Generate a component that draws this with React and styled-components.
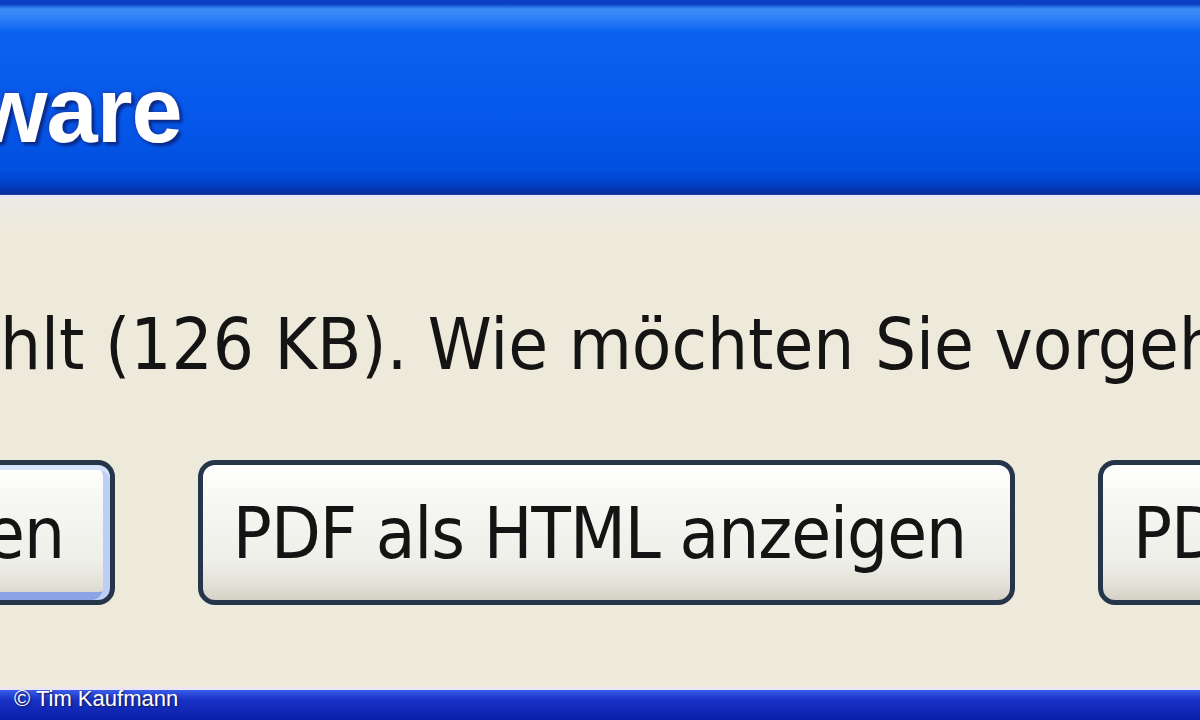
import React from "react";
import styled, { createGlobalStyle } from "styled-components";

const GlobalStyle = createGlobalStyle`
	html, body {
		margin: 0;
		padding: 0;
		background: #eeeadb;
	}
	#root {
		height: 720px;
	}
`;

const App = () => {
	return (
		<>
			<GlobalStyle />
			<Window>
				<TitleBar>
					<Title>ware</Title>
				</TitleBar>

				<Content>
					<Message>hlt (126 KB). Wie möchten Sie vorgeh</Message>
					<ButtonRow>
						<DialogButton $default $width={300} $align="flex-end" $lead={-185}>
							en
						</DialogButton>
						<DialogButton $width={817}>PDF als HTML anzeigen</DialogButton>
						<DialogButton $width={400} $align="flex-start">
							PDF speichern
						</DialogButton>
					</ButtonRow>
				</Content>

				<FooterStrip>
					<Credit>© Tim Kaufmann</Credit>
				</FooterStrip>
			</Window>
		</>
	);
};

export default App;

const Window = styled.div`
	height: 720px;
	width: 1200px;
	overflow: hidden;
	display: flex;
	flex-direction: column;
	background: #eeeadb;
`;

const TitleBar = styled.div`
	height: 198px;
	flex-shrink: 0;
	box-sizing: border-box;
	padding-top: 64px;
	background: linear-gradient(
		to bottom,
		#0a3fc4 0px,
		#0a3fc4 4px,
		#3d8ef8 9px,
		#2f80f6 18px,
		#0b62f0 32px,
		#0558ea 120px,
		#024fe0 170px,
		#0140c8 184px,
		#0a2c9a 194px,
		#9db4ee 198px
	);
	border-bottom: 3px solid #e4e6f2;
`;

const Title = styled.div`
	margin-left: -24px;
	font-family: "Liberation Sans", Arial, sans-serif;
	font-weight: bold;
	font-size: 92px;
	line-height: 1;
	letter-spacing: -1px;
	color: #ffffff;
	text-shadow: 3px 3px 3px #0b2a8a, -1px -1px 4px #1a3fb0;
	white-space: nowrap;
`;

const Content = styled.div`
	flex: 1;
	display: flex;
	flex-direction: column;
	padding-top: 110px;
	background: linear-gradient(to bottom, #eceae4 0px, #eeeadb 40px);
`;

const Message = styled.div`
	font-family: "DejaVu Sans Condensed", "DejaVu Sans", sans-serif;
	font-stretch: condensed;
	font-size: 72px;
	line-height: 1;
	color: #141414;
	white-space: nowrap;
`;

const ButtonRow = styled.div`
	display: flex;
	gap: 83px;
	margin-top: 80px;
`;

const padFor = (align) => {
	if (align === "flex-end") return "0 46px 0 0";
	if (align === "flex-start") return "0 0 0 30px";
	return "0 44px 0 30px";
};

const DialogButton = styled.div`
	flex-shrink: 0;
	box-sizing: border-box;
	width: ${(p) => p.$width}px;
	height: 145px;
	margin-left: ${(p) => p.$lead || 0}px;
	display: flex;
	align-items: center;
	justify-content: ${(p) => p.$align || "center"};
	padding: ${(p) => padFor(p.$align)};
	border: 5px solid #25364a;
	border-radius: 17px;
	background: linear-gradient(
		to bottom,
		#ffffff 0%,
		#f6f6f2 30%,
		#efefea 70%,
		#e2e0d6 90%,
		#d4d0c4 100%
	);
	box-shadow: ${(p) =>
		p.$default
			? "inset 0 5px 0 #d6e2fb, inset -7px 0 0 #bcd0f6, inset 7px 0 0 #bcd0f6, inset 0 -8px 0 #8aa4e6"
			: "inset 0 3px 0 #ffffff"};
	font-family: "DejaVu Sans Condensed", "DejaVu Sans", sans-serif;
	font-stretch: condensed;
	font-size: 72px;
	line-height: 1;
	letter-spacing: -1px;
	color: #141414;
	white-space: nowrap;
`;

const FooterStrip = styled.div`
	height: 30px;
	flex-shrink: 0;
	display: flex;
	align-items: flex-start;
	padding-left: 14px;
	border-top: 3px solid #ece6f4;
	background: linear-gradient(to bottom, #3a5ce8 0px, #1832c6 10px, #0a1ea8 30px);
`;

const Credit = styled.div`
	margin-top: -3px;
	font-family: "Liberation Sans", Arial, sans-serif;
	font-size: 22px;
	line-height: 24px;
	color: #ffffff;
	text-shadow: 1px 1px 2px #1a1a4a;
	white-space: nowrap;
`;
